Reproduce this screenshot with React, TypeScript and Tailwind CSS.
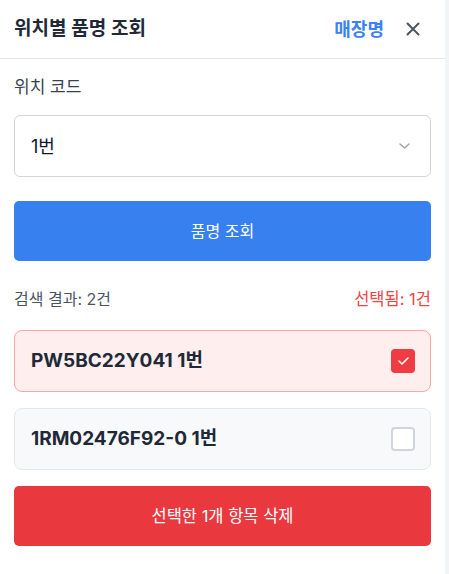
import React, { useState } from 'react';

const items = [
  { code: 'PW5BC22Y041', loc: '1번' },
  { code: '1RM02476F92-0', loc: '1번' },
];

export default function App() {
  const [selected, setSelected] = useState<string[]>(['PW5BC22Y041']);

  const toggle = (code: string) => {
    setSelected((prev) => (prev.includes(code) ? prev.filter((c) => c !== code) : [...prev, code]));
  };

  return (
    <div
      className="flex h-[574px] w-[449px] bg-[#f3f4f6]"
      style={{ fontFamily: 'Inter, "Noto Sans CJK KR", sans-serif' }}
    >
      <div className="flex h-full w-[445px] flex-col bg-white">
        {/* Header */}
        <div className="flex h-[59px] shrink-0 items-center justify-between border-b border-[#e5e7eb] pl-[14px] pr-[25px]">
          <h2 className="text-[19px] font-semibold text-[#1f2937]">위치별 품명 조회</h2>
          <div className="flex items-center gap-[22px]">
            <span className="text-[18px] font-bold text-[#3b82f6]">매장명</span>
            <button className="text-[#4b5563]">
              <svg width="14" height="14" viewBox="0 0 14 14" fill="none" stroke="currentColor" strokeWidth="2" strokeLinecap="round">
                <path d="M1.5 1.5l11 11M12.5 1.5l-11 11" />
              </svg>
            </button>
          </div>
        </div>

        {/* Body */}
        <div className="flex flex-col px-[14px] pt-[16px]">
          <label className="mb-[16px] block text-[17px] leading-[24px] text-[#374151]">위치 코드</label>
          <div className="flex h-[62px] items-center justify-between rounded-[6px] border border-[#d1d5db] pl-[16px] pr-[20px]">
            <span className="text-[18px] text-[#111827]">1번</span>
            <svg width="11" height="6" viewBox="0 0 11 6" fill="none" stroke="#9ca3af" strokeWidth="1.5" strokeLinecap="round" strokeLinejoin="round">
              <path d="M1 1l4.5 4 4.5-4" />
            </svg>
          </div>

          <button className="mt-[24px] h-[60px] w-full rounded-[5px] bg-[#3780f0] text-[16px] text-white">
            품명 조회
          </button>

          <div className="mt-[26px] flex items-center justify-between text-[16px] leading-[24px]">
            <span className="text-[#4b5563]">검색 결과: {items.length}건</span>
            <span className="text-[16.5px] text-[#ef4444]">선택됨: {selected.length}건</span>
          </div>

          <div className="mt-[19px] flex flex-col gap-[16px]">
            {items.map((it) => {
              const on = selected.includes(it.code);
              return (
                <div
                  key={it.code}
                  onClick={() => toggle(it.code)}
                  className={`flex h-[62px] items-center justify-between rounded-[8px] border pl-[16px] pr-[15px] ${
                    on ? 'border-[#fca5a5] bg-[#feeeee]' : 'border-[#e5e7eb] bg-[#f8f9fb]'
                  }`}
                >
                  <span className="text-[19px] font-bold text-[#1f2937]">
                    {it.code} {it.loc}
                  </span>
                  {on ? (
                    <span className="flex h-[24px] w-[24px] items-center justify-center rounded-[4px] bg-[#ef3b42]">
                      <svg width="11" height="8" viewBox="0 0 11 8" fill="none" stroke="white" strokeWidth="1.6" strokeLinecap="round" strokeLinejoin="round">
                        <path d="M1 4l3 3 6-6" />
                      </svg>
                    </span>
                  ) : (
                    <span className="h-[24px] w-[24px] rounded-[4px] border-2 border-[#d1d5db] bg-white" />
                  )}
                </div>
              );
            })}
          </div>

          <button className="mt-[16px] h-[60px] w-full rounded-[5px] bg-[#e9393f] text-[16.5px] text-white">
            선택한 {selected.length}개 항목 삭제
          </button>
        </div>
      </div>
    </div>
  );
}
